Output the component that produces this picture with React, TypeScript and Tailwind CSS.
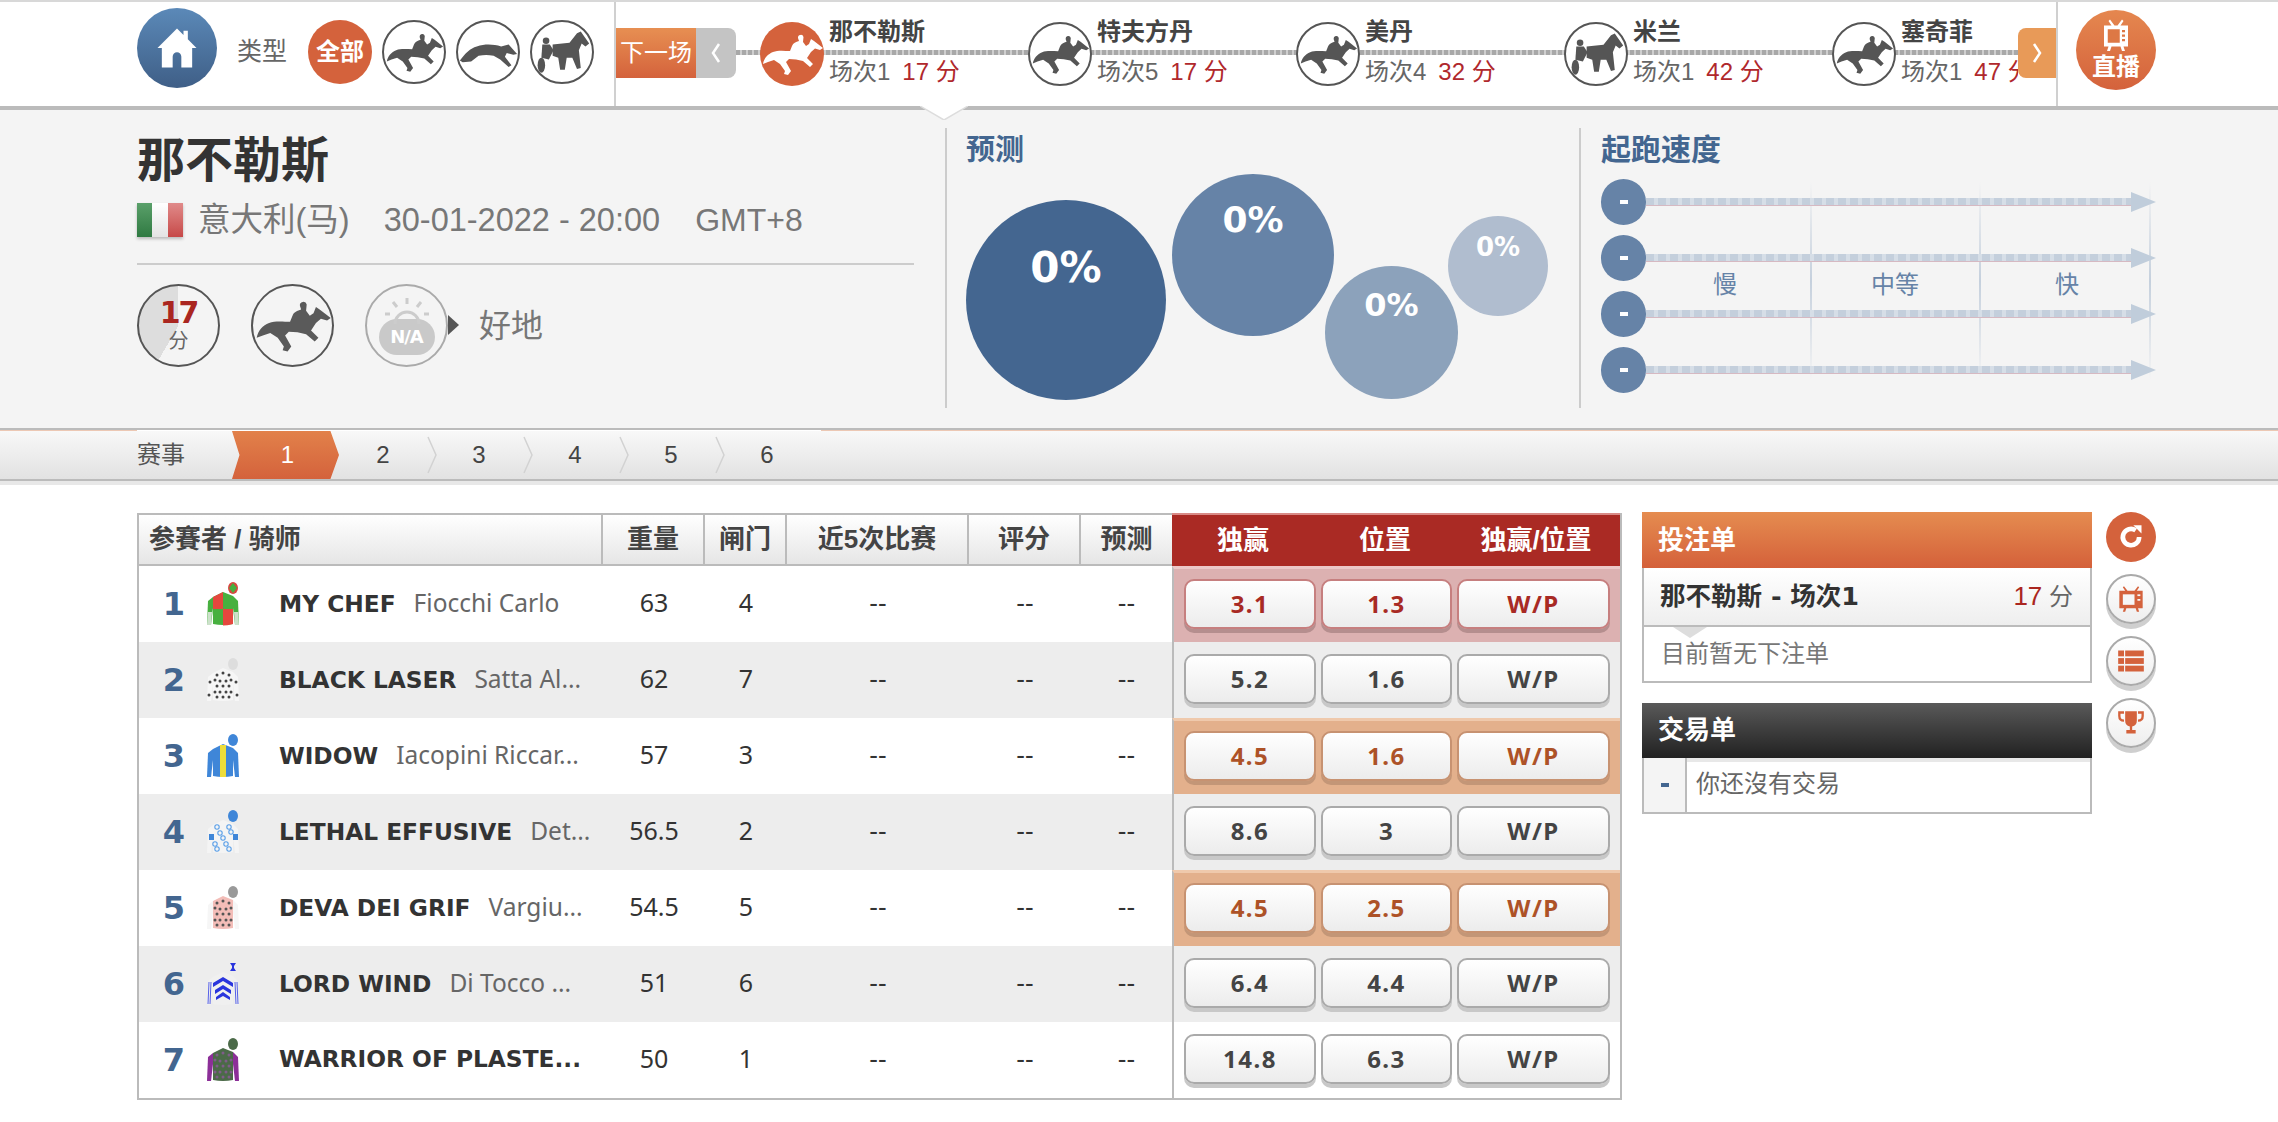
import React from "react";

const HORSE = "M3 42C4 36 8 32 13 30C18 28 25 29 30 29L32 24C33 21 36 20 39 19L38 16A2.8 2.8 0 0 1 43.5 15L43 20L46 24L49 22L51 17L54 19L63 26L60 28L55 26.5L51 30L47 36L53 42L50 45L43 39L36 37.5L29 37L26 40L31 49L28 53L24 52L25 49L20 42L14 38L8 40Z";

function Horse({ className }: { className?: string }) {
  return (
    <svg viewBox="0 0 64 64" className={className} fill="currentColor">
      <path d={HORSE} />
    </svg>
  );
}
function Dog({ className }: { className?: string }) {
  return (
    <svg viewBox="0 0 64 64" className={className} fill="currentColor">
      <path d="M2 41C8 33 13 28 20 26C30 23 38 24 46 26L54 24L63 34L59 35L52 33L50 37L57 46L54 48L45 40L38 36C32 35 28 35 22 36L14 42L5 43Z" />
    </svg>
  );
}
function Harness({ className }: { className?: string }) {
  return (
    <svg viewBox="0 0 64 64" className={className} fill="currentColor">
      <path d="M22 24L40 22L48 12L52 10L61 23L57 26L53 23L50 30L52 49L48 50L43 38L37 38L35 51L30 51L28 38L22 36Z" />
      <circle cx="15" cy="20" r="3.5" />
      <path d="M11 24L19 24L23 30L18 40L10 38Z" />
      <ellipse cx="10" cy="46" rx="4" ry="8" />
    </svg>
  );
}

function RaceIcon({ kind, active }: { kind: "h" | "d" | "t"; active?: boolean }) {
  const cls = active
    ? "w-16 h-16 rounded-full bg-[#d4623c] text-white flex-none relative z-10"
    : "w-16 h-16 rounded-full border-2 border-[#555555] bg-white text-[#555555] flex-none relative z-10";
  const ic = "w-full h-full blur-[0.5px]";
  return (
    <div className={cls}>
      {kind === "h" && <Horse className={ic} />}
      {kind === "d" && <Dog className={ic} />}
      {kind === "t" && <Harness className={ic} />}
    </div>
  );
}

const races = [
  { name: "那不勒斯", sub: "场次1", t: "17", kind: "h" as const, active: true },
  { name: "特夫方丹", sub: "场次5", t: "17", kind: "h" as const },
  { name: "美丹", sub: "场次4", t: "32", kind: "h" as const },
  { name: "米兰", sub: "场次1", t: "42", kind: "t" as const },
  { name: "塞奇菲", sub: "场次1", t: "47", kind: "h" as const },
];

type SilkSpec = {
  body: string;
  sleeve: string;
  cap: string;
  extra?: React.ReactNode;
  dots?: string;
  sleeveDots?: boolean;
  rings?: boolean;
};

const dotPts = [
  [10, 17], [16, 15], [22, 17],
  [8, 22], [13, 23], [19, 23], [24, 22],
  [10, 28], [16, 28], [22, 28],
  [8, 34], [13, 34], [19, 34], [24, 34],
  [10, 39], [16, 39], [22, 39],
];

const silks: SilkSpec[] = [
  {
    body: "#47b03f", sleeve: "#47b03f", cap: "#d9463f",
    extra: (
      <>
        <path d="M6 15L16 10V27H6Z" fill="#e5473e" />
        <path d="M16 27H26V42Q20 43.5 16 43.5Z" fill="#e5473e" />
        <path d="M26 1L30 6L26 11L22 6Z" fill="#47b03f" />
        <path d="M1 30L5 30L4 43L0 43Z" fill="#eeeeee" opacity="0.8" />
        <path d="M31 30L27 30L28 43L32 43Z" fill="#eeeeee" opacity="0.8" />
      </>
    ),
  },
  { body: "#f6f6f6", sleeve: "#f6f6f6", cap: "#dddddd", dots: "#444444", sleeveDots: true },
  {
    body: "#3f86d8", sleeve: "#3f86d8", cap: "#3f86d8",
    extra: <rect x="13" y="11" width="6" height="32" fill="#eedd3a" />,
  },
  { body: "#f4f4f4", sleeve: "#f4f4f4", cap: "#3f86d8", rings: true },
  { body: "#f3bdb8", sleeve: "#f6f6f6", cap: "#999999", dots: "#555555" },
  {
    body: "#f0f0f0", sleeve: "#f0f0f0", cap: "transparent",
    extra: (
      <>
        <path d="M6 21L16 15L26 21V25L16 19L6 25Z" fill="#2a35dd" />
        <path d="M8 28L16 23L24 28V32L16 27L8 32Z" fill="#2a35dd" />
        <path d="M9 35L16 30L23 35V38L16 34L9 38Z" fill="#2a35dd" />
        <path d="M2 20L1 42M4 20L3 42M28 20L29 42M30 20L31 42" stroke="#5560e8" strokeWidth="1" fill="none" />
        <path d="M23 1H29L27 4V6L29 9H23L25 6V4Z" fill="#2a35dd" />
      </>
    ),
  },
  { body: "#4b6a48", sleeve: "#8c2f98", cap: "#4b6a48", dots: "#7f5c8a" },
];

function Silk({ s }: { s: SilkSpec }) {
  return (
    <svg viewBox="0 0 32 44" className="w-8 h-11 flex-none blur-[0.4px]">
      <path d="M6 15L1 19L0 43H4L6 26Z" fill={s.sleeve} />
      <path d="M26 14L31 19L32 43H28L26 26Z" fill={s.sleeve} />
      <path d="M6 15L16 10L26 14V42Q16 44 6 42Z" fill={s.body} />
      <ellipse cx="26" cy="6" rx="5" ry="6" fill={s.cap} />
      {s.extra}
      {s.dots && dotPts.map(([x, y], i) => <circle key={i} cx={x} cy={y} r="1.5" fill={s.dots} />)}
      {s.sleeveDots && [[3, 24], [29, 24], [2, 37], [30, 37]].map(([x, y], i) => <circle key={i} cx={x} cy={y} r="1.5" fill={s.dots} />)}
      {s.rings && (
        <>
          {dotPts.filter((_, i) => i % 2 === 0).map(([x, y], i) => (
            <circle key={i} cx={x} cy={y} r="2.2" fill="none" stroke="#5a9fe8" strokeWidth="1.1" />
          ))}
          <rect x="2" y="24" width="5" height="6" fill="#3f86d8" />
          <rect x="26" y="24" width="5" height="6" fill="#3f86d8" />
        </>
      )}
    </svg>
  );
}

type Tone = "red" | "orange" | "plain";
const rows: {
  n: number; name: string; jockey: string; w: string; gate: string; odds: [string, string]; tone: Tone;
}[] = [
  { n: 1, name: "MY CHEF", jockey: "Fiocchi Carlo", w: "63", gate: "4", odds: ["3.1", "1.3"], tone: "red" },
  { n: 2, name: "BLACK LASER", jockey: "Satta Al...", w: "62", gate: "7", odds: ["5.2", "1.6"], tone: "plain" },
  { n: 3, name: "WIDOW", jockey: "Iacopini Riccar...", w: "57", gate: "3", odds: ["4.5", "1.6"], tone: "orange" },
  { n: 4, name: "LETHAL EFFUSIVE", jockey: "Det...", w: "56.5", gate: "2", odds: ["8.6", "3"], tone: "plain" },
  { n: 5, name: "DEVA DEI GRIF", jockey: "Vargiu...", w: "54.5", gate: "5", odds: ["4.5", "2.5"], tone: "orange" },
  { n: 6, name: "LORD WIND", jockey: "Di Tocco ...", w: "51", gate: "6", odds: ["6.4", "4.4"], tone: "plain" },
  { n: 7, name: "WARRIOR OF PLASTE...", jockey: "", w: "50", gate: "1", odds: ["14.8", "6.3"], tone: "plain" },
];

function OddBtn({ label, tone, w }: { label: string; tone: Tone; w: string }) {
  const t =
    tone === "red"
      ? "border-[#c67f7f] shadow-[0_4px_0_#b58e8e] text-[#a82a24]"
      : tone === "orange"
      ? "border-[#c79271] shadow-[0_4px_0_#c39677] text-[#ad5227]"
      : "border-[#aaaaaa] shadow-[0_4px_0_#c8c8c8] text-[#444444]";
  return (
    <div
      className={`${w} h-[50px] rounded-[10px] border-2 bg-gradient-to-b from-white to-[#ececec] flex items-center justify-center font-['Noto_Sans','Noto_Sans_CJK_SC',sans-serif] font-bold text-[24px] tracking-[1.5px] ${t}`}
    >
      {label}
    </div>
  );
}

function Chevron() {
  return (
    <svg viewBox="0 0 10 48" className="absolute right-[-6px] top-0 w-[10px] h-12" fill="none" stroke="#d2d2d2" strokeWidth="1.5">
      <path d="M1 6L9 24L1 42" />
    </svg>
  );
}

function SideCircle({ children }: { children: React.ReactNode }) {
  return (
    <div className="w-[50px] h-[50px] rounded-full border-2 border-[#aaaaaa] bg-gradient-to-b from-white to-[#eeeeee] shadow-[0_5px_0_#cfcfcf] flex items-center justify-center">
      {children}
    </div>
  );
}

const hdrCell = "flex items-center justify-center border-r-2 border-[#bbbbbb] h-full font-bold text-[26px] text-[#444444] whitespace-nowrap";

export default function App() {
  return (
    <div className="w-[2278px] h-[1122px] bg-white overflow-hidden font-['Liberation_Sans','Noto_Sans_CJK_SC',sans-serif] text-[24px] text-[#666666]">
      {/* top bar */}
      <div className="relative h-[110px] border-t-2 border-b-4 border-t-[#d8d8d8] border-b-[#bbbbbb] flex items-start">
        <div className="w-[616px] h-full border-r-2 border-[#d0d0d0] flex items-start pl-[137px] flex-none">
          <div className="mt-[6px] w-20 h-20 rounded-full bg-gradient-to-b from-[#5b89b8] to-[#3f5f87] flex items-center justify-center flex-none">
            <svg viewBox="0 0 24 24" className="w-[52px] h-[52px]" fill="white">
              <path d="M12 3L15 6V4H17V8L21 12H19V21H14V16A2 2 0 0 0 10 16V21H5V12H3Z" />
            </svg>
          </div>
          <div className="mt-[18px] ml-5 w-[50px] h-16 flex items-center text-[25px] text-[#666666] flex-none whitespace-nowrap">类型</div>
          <div className="mt-[18px] ml-[21px] flex gap-[10px] flex-none">
            <div className="w-16 h-16 rounded-full bg-[#d4623c] text-white font-bold flex items-center justify-center">全部</div>
            <RaceIcon kind="h" />
            <RaceIcon kind="d" />
            <RaceIcon kind="t" />
          </div>
        </div>
        <div className="mt-[26px] flex flex-none h-[50px]">
          <div className="w-20 bg-gradient-to-b from-[#e78f52] to-[#d4623c] text-white flex items-center justify-center">下一场</div>
          <div className="w-10 bg-[#c4c4c4] rounded-r-lg text-white flex items-center justify-center">
            <svg viewBox="0 0 12 24" className="w-3 h-6" fill="none" stroke="white" strokeWidth="2.5"><path d="M9 3L3 12L9 21" /></svg>
          </div>
        </div>
        <div className="relative flex-1 h-full overflow-hidden flex items-center pl-6">
          <div className="absolute left-0 right-0 top-[48px] h-[5px] bg-[repeating-linear-gradient(90deg,#a8a8a8_0_4px,#cfcfcf_4px_6px)]" />
          {races.map((r) => (
            <div key={r.name} className="flex items-center w-[268px] flex-none">
              <RaceIcon kind={r.kind} active={r.active} />
              <div className="ml-[5px] relative whitespace-nowrap">
                <div className="h-10 leading-[36px] font-bold text-[#444444]">{r.name}</div>
                <div className="h-10 leading-[36px] text-[#666666]">
                  {r.sub}
                  <span className="ml-3 text-[#b0282c]">{r.t} 分</span>
                </div>
              </div>
            </div>
          ))}
        </div>
        <div className="mt-[26px] w-[38px] h-[50px] bg-[#e89a58] rounded-l-lg flex items-center justify-center flex-none">
          <svg viewBox="0 0 12 24" className="w-3 h-6" fill="none" stroke="white" strokeWidth="2.5"><path d="M3 3L9 12L3 21" /></svg>
        </div>
        <div className="h-full border-l-2 border-[#d0d0d0] w-[222px] flex-none pl-[18px]">
          <div className="mt-2 w-20 h-20 rounded-full bg-gradient-to-b from-[#e5874f] to-[#d4623c] flex flex-col items-center text-white font-bold text-[24px] leading-[26px]">
            <svg viewBox="0 0 24 24" className="w-9 h-9 mt-[8px]" fill="white">
              <path d="M8 1L11 5H13L16 1L17 2L15 5H20V19H17L18 22H16L15 19H9L8 22H6L7 19H4V5H9L7 2Z" />
              <rect x="6.5" y="7.5" width="8" height="9" fill="#dd7845" />
              <rect x="16" y="8" width="2" height="1.5" fill="#dd7845" />
              <rect x="16" y="11" width="2" height="1.5" fill="#dd7845" />
              <rect x="16" y="14" width="2" height="1.5" fill="#dd7845" />
            </svg>
            直播
          </div>
        </div>
        {/* notch */}
        <svg viewBox="0 0 48 14" className="absolute left-[920px] top-[104px] w-12 h-[14px] z-10">
          <path d="M0 0H48L24 14Z" fill="#ffffff" />
          <path d="M0 0L24 14L48 0" fill="none" stroke="#dddddd" strokeWidth="1.5" />
        </svg>
      </div>

      {/* info panel */}
      <div className="h-[320px] bg-[#f4f4f4] border-b-2 border-[#bbbbbb] flex">
        <div className="w-[945px] flex-none pl-[137px] pr-[31px] pt-[22px]">
          <div className="h-14 leading-[58px] text-[48px] font-bold text-[#333333]">那不勒斯</div>
          <div className="h-16 flex items-center text-[32.5px] text-[#777777] whitespace-nowrap">
            <div className="w-[46px] h-[34px] flex shadow-[0_2px_3px_#bbbbbb] flex-none">
              <div className="flex-1 bg-gradient-to-b from-[#5aa06a] to-[#2f7a42]" />
              <div className="flex-1 bg-gradient-to-b from-white to-[#e4e4e4]" />
              <div className="flex-1 bg-gradient-to-b from-[#e08a8a] to-[#c64848]" />
            </div>
            <span className="ml-[15px]">意大利(马)</span>
            <span className="ml-[34px]">30-01-2022 - 20:00</span>
            <span className="ml-[35px] text-[32px]">GMT+8</span>
          </div>
          <div className="mt-[11px] h-[2px] bg-[#cccccc]" />
          <div className="mt-[19px] flex items-center">
            <div className="w-[83px] h-[83px] rounded-full border-2 border-[#555555] bg-[conic-gradient(#f4f4f4_0deg_210deg,#dddddd_210deg_360deg)] flex flex-col items-center justify-center leading-none">
              <span className="text-[30px] font-bold text-[#aa2620] leading-[30px] font-['DejaVu_Sans',sans-serif] tracking-[-2px]">17</span>
              <span className="text-[20px] text-[#666666] leading-[26px]">分</span>
            </div>
            <div className="ml-[31px] w-[83px] h-[83px] rounded-full border-2 border-[#555555] text-[#5a5a5a] flex-none">
              <Horse className="w-full h-full blur-[0.5px]" />
            </div>
            <div className="relative ml-[31px] w-[83px] h-[83px] rounded-full border-2 border-[#aaaaaa] flex flex-col items-center justify-end pb-[10px] flex-none">
              <svg viewBox="0 0 56 30" className="absolute left-[12px] top-[10px] w-[56px] h-[30px]" fill="none" stroke="#cccccc" strokeWidth="3">
                <path d="M28 2V8M14 6L18 11M42 6L38 11M6 18H11M45 18H50" />
                <path d="M16 28A12 12 0 0 1 40 28" />
              </svg>
              <div className="w-[56px] h-[36px] rounded-[18px] bg-[#c9c9c9] text-white font-bold text-[18px] leading-[36px] text-center font-['DejaVu_Sans',sans-serif] tracking-[-1px]">N/A</div>
              <div className="absolute right-[-13px] top-[29px] w-0 h-0 border-y-[10px] border-y-transparent border-l-[11px] border-l-[#555555]" />
            </div>
            <span className="ml-[31px] text-[32px] text-[#777777]">好地</span>
          </div>
        </div>

        <div className="relative w-[634px] flex-none mt-[18px] h-[280px] border-l-2 border-[#cccccc] pl-[19px] font-['DejaVu_Sans','Noto_Sans_CJK_SC',sans-serif]">
          <div className="h-[44px] leading-[44px] text-[29px] font-bold text-[#436690] font-['Liberation_Sans','Noto_Sans_CJK_SC',sans-serif]">预测</div>
          <div className="absolute left-[19px] top-[72px] w-[200px] h-[200px] rounded-full bg-[#446690] text-white font-bold text-[42px] leading-[42px] text-center pt-[47px]">0%</div>
          <div className="absolute left-[225px] top-[46px] w-[162px] h-[162px] rounded-full bg-[#6683a7] text-white font-bold text-[36px] leading-[36px] text-center pt-[28px]">0%</div>
          <div className="absolute left-[378px] top-[138px] w-[133px] h-[133px] rounded-full bg-[#8ca2bb] text-white font-bold text-[32px] leading-[32px] text-center pt-[23px]">0%</div>
          <div className="absolute left-[501px] top-[88px] w-[100px] h-[100px] rounded-full bg-[#b0bdcf] text-white font-bold text-[26px] leading-[26px] text-center pt-[18px]">0%</div>
        </div>

        <div className="relative flex-1 mt-[18px] h-[280px] border-l-2 border-[#cccccc] pl-5">
          <div className="h-[44px] leading-[44px] text-[30px] font-bold text-[#436690]">起跑速度</div>
          <div className="mt-[7px] w-[555px] flex flex-col gap-[10px]">
            {[0, 1, 2, 3].map((i) => (
              <div key={i} className="relative z-10 h-[46px] flex items-center">
                <div className="w-[45px] h-[46px] rounded-full bg-[#6683a7] flex items-center justify-center flex-none">
                  <div className="w-[8px] h-[4px] bg-white" />
                </div>
                <div className="flex-1 h-[8px] bg-[repeating-linear-gradient(90deg,#c4cfdc_0_8px,#d6dee7_8px_12px)] border-b border-[#d6b9c2]" />
                <div className="w-0 h-0 border-y-[10px] border-y-transparent border-l-[25px] border-l-[#c0cddb] flex-none" />
              </div>
            ))}
          </div>
          <div className="absolute left-[229px] top-[54px] w-[2px] h-[198px] bg-gradient-to-b from-transparent via-[#c5d0dd] to-transparent" />
          <div className="absolute left-[398px] top-[54px] w-[2px] h-[198px] bg-gradient-to-b from-transparent via-[#c5d0dd] to-transparent" />
          <div className="absolute left-[568px] top-[54px] w-[2px] h-[198px] bg-gradient-to-b from-transparent via-[#c5d0dd] to-transparent" />
          <div className="absolute left-[114px] top-[145px] w-[60px] text-center text-[#6683a7] text-[24px] leading-[24px]">慢</div>
          <div className="absolute left-[284px] top-[145px] w-[60px] text-center text-[#6683a7] text-[24px] leading-[24px]">中等</div>
          <div className="absolute left-[456px] top-[145px] w-[60px] text-center text-[#6683a7] text-[24px] leading-[24px]">快</div>
        </div>
      </div>

      {/* peach hairline */}
      <div className="h-[1px] flex">
        <div className="w-[137px] bg-[#ecc8b4]" />
        <div className="w-[684px]" />
        <div className="flex-1 bg-[#ecc8b4]" />
      </div>

      {/* race tabs */}
      <div className="h-[50px] border-b-2 border-[#bbbbbb] bg-gradient-to-b from-[#f8f8f8] to-[#e2e2e2] flex items-stretch pl-[137px]">
        <div className="w-[95px] flex items-center text-[#555555] flex-none">赛事</div>
        <div className="w-[107px] h-12 flex items-center justify-center text-white flex-none pl-1 bg-gradient-to-b from-[#e2814a] to-[#d4623c] [clip-path:polygon(0_0,92%_0,100%_50%,92%_100%,0_100%,7%_50%)]">1</div>
        {["2", "3", "4", "5", "6"].map((n, i) => (
          <div key={n} className={`relative w-24 h-12 flex items-center justify-center text-[#444444] flex-none ${i === 0 ? "-ml-[4px]" : ""}`}>
            {n}
            {i < 4 && <Chevron />}
          </div>
        ))}
      </div>
      <div className="h-[4px] bg-[#e8e8e8]" />

      {/* main */}
      <div className="pl-[137px] pt-[28px] flex items-start">
        {/* table */}
        <div className="w-[1485px] flex-none border-x-2 border-b-2 border-[#bbbbbb] font-['Liberation_Sans','Noto_Sans_CJK_SC',sans-serif]">
          <div className="h-[53px] flex">
            <div className="flex-none w-[1033px] h-full flex border-y-2 border-[#bbbbbb] bg-gradient-to-b from-white to-[#e6e6e6]">
              <div className={`${hdrCell} w-[464px] !justify-start pl-[10px]`}>参賽者 / 骑师</div>
              <div className={`${hdrCell} w-[102px]`}>重量</div>
              <div className={`${hdrCell} w-[82px]`}>闸门</div>
              <div className={`${hdrCell} w-[182px]`}>近5次比赛</div>
              <div className={`${hdrCell} w-[112px]`}>评分</div>
              <div className={`${hdrCell} w-[91px] !border-r-0`}>预测</div>
            </div>
            <div className="flex-1 h-full bg-[#aa2a24] border-t-2 border-[#d98a86] flex items-center text-white font-bold text-[26px]">
              <div className="w-[142px] text-center">独赢</div>
              <div className="w-[142px] text-center">位置</div>
              <div className="flex-1 text-center pr-[4px]">独赢/位置</div>
            </div>
          </div>
          {rows.map((r, i) => {
            const stripe = i % 2 === 1 ? "bg-[#ededed]" : "bg-white";
            const right =
              r.tone === "red"
                ? "bg-[#dcb1b1] border-t-[3px] border-t-[#ecc8c8] pt-[10px]"
                : r.tone === "orange"
                ? "bg-[#e3b08c] border-t-[3px] border-t-[#efc9ac] pt-[10px]"
                : "pt-[12px]";
            return (
              <div key={r.n} className={`h-[76px] flex ${stripe}`}>
                <div className="w-[1033px] flex-none flex items-center">
                  <div className="w-[68px] text-center text-[32px] font-bold text-[#436690] font-['DejaVu_Sans',sans-serif] tracking-[-2px] flex-none">{r.n}</div>
                  <Silk s={silks[i]} />
                  <div className="w-[364px] pl-10 pb-[2px] flex-none whitespace-nowrap flex items-baseline text-[#666666]">
                    <span className="font-['DejaVu_Sans',sans-serif] font-bold text-[23.3px] text-[#333333]">{r.name}</span>
                    {r.jockey && <span className="ml-[18px] font-['Noto_Sans',sans-serif] text-[24.5px]">{r.jockey}</span>}
                  </div>
                  <div className="w-[102px] pb-[2px] text-center text-[#333333] text-[25px] font-['Noto_Sans',sans-serif] flex-none">{r.w}</div>
                  <div className="w-[82px] pb-[2px] text-center text-[#333333] text-[25px] font-['Noto_Sans',sans-serif] flex-none">{r.gate}</div>
                  <div className="w-[182px] pb-[2px] text-center text-[#333333] text-[26px] flex-none">--</div>
                  <div className="w-[112px] pb-[2px] text-center text-[#333333] text-[26px] flex-none">--</div>
                  <div className="w-[91px] pb-[2px] text-center text-[#333333] text-[26px] flex-none">--</div>
                </div>
                <div className={`flex-1 border-l-2 border-l-[#bbbbbb] flex gap-[5px] pl-[10px] ${right}`}>
                  <OddBtn label={r.odds[0]} tone={r.tone} w="w-[132px]" />
                  <OddBtn label={r.odds[1]} tone={r.tone} w="w-[131px]" />
                  <OddBtn label="W/P" tone={r.tone} w="w-[153px]" />
                </div>
              </div>
            );
          })}
        </div>

        {/* slip */}
        <div className="w-[450px] ml-5 flex-none -mt-[1px]">
          <div className="h-[56px] bg-gradient-to-b from-[#e58c50] to-[#d4603a] text-white font-bold text-[26px] flex items-center pl-4">投注单</div>
          <div className="border-x-2 border-b-2 border-[#bbbbbb]">
            <div className="relative h-[59px] border-b-2 border-[#bbbbbb] bg-gradient-to-b from-white to-[#eeeeee] flex items-center justify-between pl-[16px] pr-[17px]">
              <span className="font-bold text-[#333333] font-['DejaVu_Sans','Noto_Sans_CJK_SC',sans-serif] text-[25.5px] whitespace-nowrap">那不勒斯 - 场次1</span>
              <span className="text-[#666666]"><span className="text-[#aa2620] text-[26px]">17</span> 分</span>
              <div className="absolute left-[29px] bottom-[-13px] w-0 h-0 border-x-[17px] border-x-transparent border-t-[11px] border-t-[#dddddd]" />
            </div>
            <div className="h-[54px] flex items-center pl-[17px] text-[#777777]">目前暂无下注单</div>
          </div>
          <div className="mt-[20px] h-[55px] bg-gradient-to-b from-[#5a5a5a] to-[#222222] text-white font-bold text-[26px] flex items-center pl-4">交易单</div>
          <div className="border-x-2 border-b-2 border-[#bbbbbb] flex h-[56px]">
            <div className="w-[43px] bg-[#f4f4f4] border-r-2 border-[#bbbbbb] flex items-center justify-center flex-none">
              <div className="w-2 h-[4px] bg-[#436690]" />
            </div>
            <div className="flex-1 flex flex-col">
              <div className="h-1 bg-[#e8e8e8] flex-none" />
              <div className="flex-1 flex items-center pl-[9px] pb-[6px] text-[#666666]">你还沒有交易</div>
            </div>
          </div>
        </div>

        {/* side buttons */}
        <div className="ml-[14px] -mt-[1px] flex flex-col gap-3 flex-none">
          <div className="w-[50px] h-[50px] rounded-full bg-[#d4623c] flex items-center justify-center">
            <svg viewBox="0 0 24 24" className="w-7 h-7" fill="none" stroke="white" strokeWidth="4">
              <path d="M19 12A7 7 0 1 1 16 6.3" />
              <path d="M14 2H21V9Z" fill="white" strokeWidth="0" />
            </svg>
          </div>
          <SideCircle>
            <svg viewBox="0 0 24 24" className="w-7 h-7" fill="#d4623c">
              <path d="M6 1L9 5H15L18 1L19 2L17 5H22V20H18L19 23H17L16 20H8L7 23H5L6 20H2V5H7L5 2Z" />
              <rect x="5" y="8" width="10" height="9" fill="#f6f6f6" />
              <rect x="17.5" y="8" width="2.5" height="1.5" fill="#f6f6f6" />
              <rect x="17.5" y="12" width="2.5" height="1.5" fill="#f6f6f6" />
            </svg>
          </SideCircle>
          <SideCircle>
            <svg viewBox="0 0 24 24" className="w-7 h-7" fill="#d4623c">
              <rect x="1" y="3" width="5" height="5" />
              <rect x="7" y="3" width="16" height="5" />
              <rect x="1" y="9.5" width="5" height="5" />
              <rect x="7" y="9.5" width="16" height="5" />
              <rect x="1" y="16" width="5" height="5" />
              <rect x="7" y="16" width="16" height="5" />
            </svg>
          </SideCircle>
          <SideCircle>
            <svg viewBox="0 0 24 24" className="w-7 h-7" fill="#d4623c">
              <path d="M7 2H17V10Q17 14 13 15V18H16V21H8V18H11V15Q7 14 7 10Z" />
              <path d="M6 3H2V6Q2 10 6 10M18 3H22V6Q22 10 18 10" fill="none" stroke="#d4623c" strokeWidth="2" />
            </svg>
          </SideCircle>
        </div>
      </div>
    </div>
  );
}
